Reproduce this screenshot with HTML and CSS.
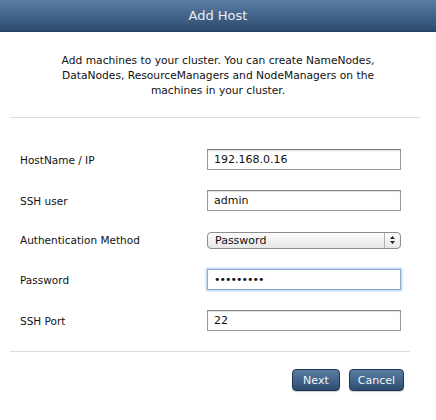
FILE: index.html
```html
<!DOCTYPE html>
<html>
<head>
<meta charset="utf-8">
<link rel="stylesheet" href="styles.css">
</head>
<body>
<div class="dialog">
  <div class="header">Add Host</div>
  <p class="desc">Add machines to your cluster. You can create NameNodes, DataNodes, ResourceManagers and NodeManagers on the machines in your cluster.</p>
  <hr class="sep top-sep">
  <form class="form">
    <div class="row"><label>HostName / IP</label><div class="field"><input class="text" type="text" value="192.168.0.16"></div></div>
    <div class="row"><label>SSH user</label><div class="field"><input class="text" type="text" value="admin"></div></div>
    <div class="row row-select"><label>Authentication Method</label><div class="field"><div class="select"><span class="sel-val">Password</span><span class="sel-arrow"><svg width="7" height="10" viewBox="0 0 7 10"><path d="M3.5 1 L6 4 L1 4 Z M3.5 9 L6 6 L1 6 Z" fill="#222"/></svg></span></div></div></div>
    <div class="row"><label>Password</label><div class="field"><input class="text focus" type="text" value="•••••••••"></div></div>
    <div class="row"><label>SSH Port</label><div class="field"><input class="text" type="text" value="22"></div></div>
  </form>
  <hr class="sep bottom-sep">
  <div class="buttons">
    <button class="btn btn-next" type="button">Next</button>
    <button class="btn" type="button">Cancel</button>
  </div>
</div>
</body>
</html>
```
FILE: styles.css
```css
html, body {
  margin: 0;
  padding: 0;
  background: #fff;
}
body {
  font-family: "DejaVu Sans", "Liberation Sans", sans-serif;
  font-size: 10.5px;
  color: #111;
  width: 436px;
  height: 420px;
  overflow: hidden;
}
.header {
  height: 31px;
  line-height: 31px;
  text-align: center;
  color: #e9eef4;
  font-size: 13px;
  background: linear-gradient(#5b7fa5, #2c4a6f);
  border-bottom: 1px solid #24405f;
}
.desc {
  margin: 0;
  padding: 21px 50px 0;
  text-align: center;
  line-height: 15px;
  font-size: 10.7px;
}
.sep {
  border: 0;
  height: 1px;
  background: #dcdcdc;
  margin: 0;
}
.top-sep {
  margin: 19px 16px 0 10px;
}
.form {
  padding: 31px 0 0 20px;
  display: flex;
  flex-direction: column;
  gap: 20px;
}
.row {
  display: flex;
  align-items: center;
  height: 21px;
}
.row-select {
  height: 18px;
}
.row label {
  width: 187px;
  font-size: 10.5px;
}
.field {
  width: 194px;
}
.text {
  box-sizing: border-box;
  width: 194px;
  height: 21px;
  margin: 0;
  border: 1px solid #9a9a9a;
  border-top-color: #7f7f7f;
  border-radius: 0;
  padding: 0 0 0 6px;
  font-family: "DejaVu Sans", sans-serif;
  font-size: 11px;
  color: #111;
  box-shadow: inset 0 1px 1px rgba(0,0,0,0.12);
  outline: none;
}
.text.focus {
  border-color: #8fa9c6;
  box-shadow: 0 0 2px 1px #a9cdf0;
  letter-spacing: -1px;
}
.select {
  box-sizing: border-box;
  height: 17px;
  width: 194px;
  border: 1px solid #8c8c8c;
  border-radius: 4px;
  display: flex;
  background: linear-gradient(#fdfdfd, #e6e6e6);
}
.sel-val {
  flex: 1;
  padding-left: 7px;
  line-height: 15px;
  font-size: 11px;
}
.sel-arrow {
  width: 15px;
  border-left: 1px solid #b3b3b3;
  display: flex;
  align-items: center;
  justify-content: center;
}
.bottom-sep {
  margin: 20px 26px 0 10px;
}
.buttons {
  display: flex;
  justify-content: flex-end;
  gap: 9px;
  padding: 17px 32px 0 0;
}
.btn {
  height: 22px;
  padding: 0 8px;
  border: 1px solid #1e3552;
  border-radius: 4px;
  background: linear-gradient(#5a7ea4, #2d4b70);
  color: #f3f6fa;
  font-family: "DejaVu Sans", sans-serif;
  font-size: 11px;
  box-shadow: 0 1px 1px rgba(0,0,0,0.2);
}
.btn-next {
  padding: 0 10px;
}
```
